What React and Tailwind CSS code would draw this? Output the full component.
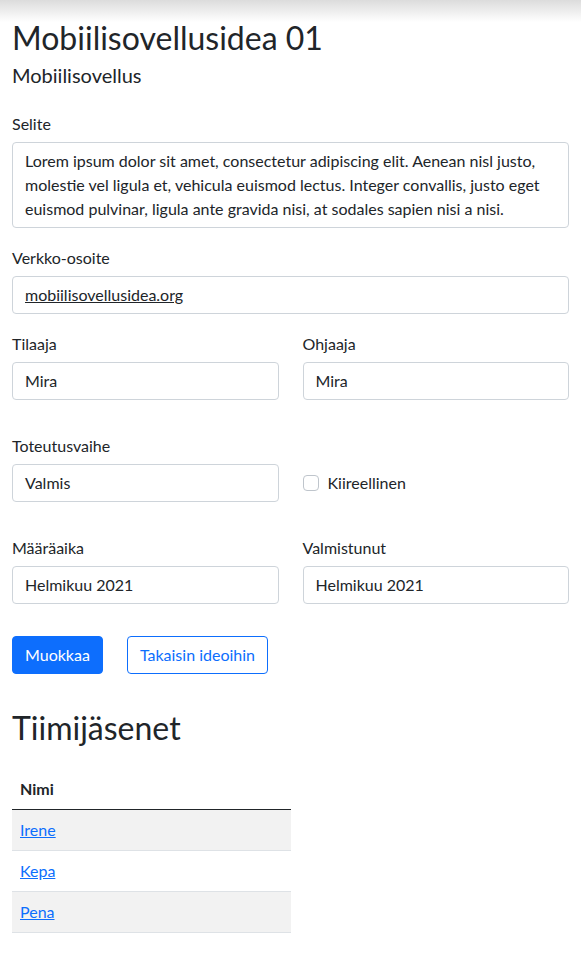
import React from "react";

const font = { fontFamily: "Lato, 'Noto Sans', sans-serif" };

function Label({ children }) {
  return <div className="text-[16px] leading-[24px] mb-[6px] text-[#212529]">{children}</div>;
}

function Field({ children, underline }) {
  return (
    <div
      className={
        "h-[38px] border border-[#ced4da] rounded-[4px] px-3 flex items-center text-[16px] text-[#212529] bg-white " +
        (underline ? "underline" : "")
      }
    >
      {children}
    </div>
  );
}

export default function App() {
  return (
    <div className="relative bg-white min-h-[972px] text-[#212529]" style={font}>
      <div className="absolute top-0 left-0 right-0 h-[22px] bg-gradient-to-b from-[#dcdcdc] to-white/0 pointer-events-none" />
      <div className="px-3 pt-[19px]">
        <h1 className="text-[32px] leading-[38px] font-normal">Mobiilisovellusidea 01</h1>
        <h5 className="text-[20px] leading-[24px] mt-[6px] font-normal">Mobiilisovellus</h5>

        <div className="mt-[25px]">
          <Label>Selite</Label>
          <div className="border border-[#ced4da] rounded-[4px] px-3 py-[6px] text-[16px] leading-[24px]">
            Lorem ipsum dolor sit amet, consectetur adipiscing elit. Aenean nisl justo,
            <br />
            molestie vel ligula et, vehicula euismod lectus. Integer convallis, justo eget
            <br />
            euismod pulvinar, ligula ante gravida nisi, at sodales sapien nisi a nisi.
          </div>
        </div>

        <div className="mt-[18px]">
          <Label>Verkko-osoite</Label>
          <Field underline>mobiilisovellusidea.org</Field>
        </div>

        <div className="mt-[18px] grid grid-cols-2 gap-6">
          <div>
            <Label>Tilaaja</Label>
            <Field>Mira</Field>
          </div>
          <div>
            <Label>Ohjaaja</Label>
            <Field>Mira</Field>
          </div>
        </div>

        <div className="mt-[34px] grid grid-cols-2 gap-6">
          <div>
            <Label>Toteutusvaihe</Label>
            <Field>Valmis</Field>
          </div>
          <div className="flex items-end">
            <div className="h-[38px] flex items-center gap-[9px]">
              <span className="w-4 h-4 border border-[#bfc5cc] rounded-[4px] bg-white" />
              <span className="text-[16px]">Kiireellinen</span>
            </div>
          </div>
        </div>

        <div className="mt-[34px] grid grid-cols-2 gap-6">
          <div>
            <Label>Määräaika</Label>
            <Field>Helmikuu 2021</Field>
          </div>
          <div>
            <Label>Valmistunut</Label>
            <Field>Helmikuu 2021</Field>
          </div>
        </div>

        <div className="mt-[32px] flex gap-6">
          <button className="h-[38px] px-3 rounded-[4px] bg-[#0d6efd] text-white text-[16px] border border-[#0d6efd]">
            Muokkaa
          </button>
          <button className="h-[38px] px-3 rounded-[4px] bg-white text-[#0d6efd] text-[16px] border border-[#0d6efd]">
            Takaisin ideoihin
          </button>
        </div>

        <h2 className="mt-[35px] text-[32px] leading-[38px] font-normal">Tiimijäsenet</h2>

        <table className="mt-[22px] w-[279px] text-[16px] border-collapse">
          <thead>
            <tr className="border-b border-[#212529]">
              <th className="text-left font-bold px-2 py-2 leading-[24px]">Nimi</th>
            </tr>
          </thead>
          <tbody>
            {["Irene", "Kepa", "Pena"].map((n, i) => (
              <tr key={n} className={"border-b border-[#dee2e6] " + (i % 2 === 0 ? "bg-[#f2f2f2]" : "bg-white")}>
                <td className="px-2 py-2 leading-[24px]">
                  <a href="#" className="text-[#0d6efd] underline">{n}</a>
                </td>
              </tr>
            ))}
          </tbody>
        </table>
      </div>
    </div>
  );
}
